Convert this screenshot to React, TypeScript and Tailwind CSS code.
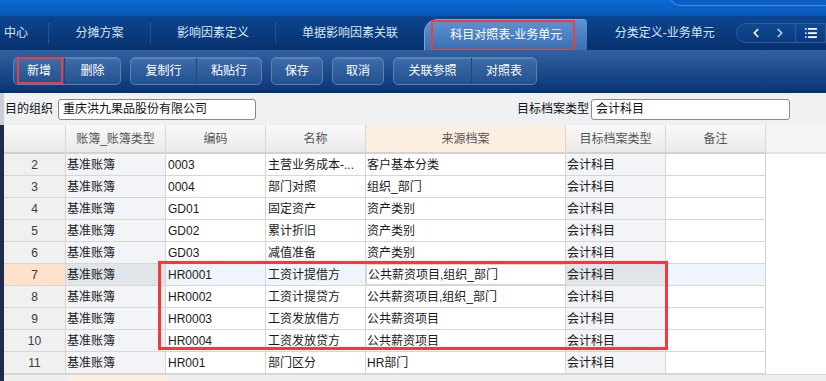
import { ChevronLeft, ChevronRight, List } from "lucide-react";

const font = "font-['Liberation_Sans','Noto_Sans_CJK_SC',sans-serif]";

const rows: string[][] = [
  ["2", "基准账簿", "0003", "主营业务成本-...", "客户基本分类", "会计科目"],
  ["3", "基准账簿", "0004", "部门对照", "组织_部门", "会计科目"],
  ["4", "基准账簿", "GD01", "固定资产", "资产类别", "会计科目"],
  ["5", "基准账簿", "GD02", "累计折旧", "资产类别", "会计科目"],
  ["6", "基准账簿", "GD03", "减值准备", "资产类别", "会计科目"],
  ["7", "基准账簿", "HR0001", "工资计提借方", "公共薪资项目,组织_部门", "会计科目"],
  ["8", "基准账簿", "HR0002", "工资计提贷方", "公共薪资项目,组织_部门", "会计科目"],
  ["9", "基准账簿", "HR0003", "工资发放借方", "公共薪资项目", "会计科目"],
  ["10", "基准账簿", "HR0004", "工资发放贷方", "公共薪资项目", "会计科目"],
  ["11", "基准账簿", "HR001", "部门区分", "HR部门", "会计科目"],
];

function Sep() {
  return <div className="h-[20px] w-0 border-l border-dotted border-[#3f67a3]" />;
}

function Btn({ label, w, first }: { label: string; w: string; first?: boolean }) {
  return (
    <div
      className={`${w} h-full flex items-center justify-center text-white text-[12px] ${
        first ? "" : "border-l border-[#1b457f]"
      }`}
    >
      {label}
    </div>
  );
}

function Group({ items }: { items: [string, string][] }) {
  return (
    <div className="flex h-[28px] rounded-[5px] border border-[#5a80b6] bg-gradient-to-b from-[#3e6dac] to-[#23508e] shadow-[inset_0_1px_0_rgba(255,255,255,0.15)]">
      {items.map(([l, w], i) => (
        <Btn key={l} label={l} w={w} first={i === 0} />
      ))}
    </div>
  );
}

export default function App() {
  return (
    <div className={`w-[826px] h-[381px] overflow-hidden bg-white ${font} text-[12px]`}>
      {/* header strip */}
      <div className="h-[16px] bg-gradient-to-b from-[#0d6ad4] to-[#0a55b6] relative">
        <div className="absolute left-[670px] top-[-10px] w-[200px] h-[16px] rounded-bl-[10px] border-l border-b border-[#4a8be0] bg-[#0b5ec7]" />
      </div>

      {/* tab bar */}
      <div className="h-[34px] flex items-end bg-gradient-to-b from-[#0b4690] to-[#08316f] text-[#dbe6f5]">
        <div className="h-full flex items-center">
          <div className="w-[48px] pl-[4px] flex items-center">中心</div>
          <Sep />
          <div className="w-[101px] text-center">分摊方案</div>
          <Sep />
          <div className="w-[124px] text-center">影响因素定义</div>
          <Sep />
          <div className="w-[148px] text-center">单据影响因素关联</div>
        </div>
        <div className="relative w-[167px] h-[31px] rounded-tl-[14px] rounded-tr-[4px] bg-gradient-to-b from-[#5d93d3] to-[#3a6fb2] border-t border-l border-[#7aa6dc] flex items-center justify-center text-white">
          科目对照表-业务单元
          <div className="absolute left-[6px] top-[0px] w-[144px] h-[31px] border-[2px] border-[#f03c3c]" />
        </div>
        <div className="w-[152px] h-full flex items-center justify-center pl-[6px]">分类定义-业务单元</div>
        <div className="h-full flex items-center">
          <div className="w-[90px] h-[20px] rounded-l-full border border-[#2f5d9a] bg-gradient-to-b from-[#0e4a94] to-[#0a3a7c] flex items-center">
            <ChevronLeft className="ml-[12px] w-[14px] h-[14px] text-white" strokeWidth={3} />
            <ChevronRight className="ml-[10px] w-[14px] h-[14px] text-[#b8c8e0]" strokeWidth={3} />
            <div className="ml-[8px] h-full border-l border-[#2f5d9a]" />
            <List className="ml-[8px] w-[14px] h-[14px] text-white" strokeWidth={3} />
          </div>
        </div>
      </div>

      {/* toolbar */}
      <div className="h-[43px] pt-[7px] pl-[13px] flex items-start gap-[9px] bg-gradient-to-b from-[#3062a2] to-[#0b3777] border-b-[3px] border-[#08306c] relative">
        <Group items={[["新增", "w-[50px]"], ["删除", "w-[56px]"]]} />
        <Group items={[["复制行", "w-[65px]"], ["粘贴行", "w-[65px]"]]} />
        <Group items={[["保存", "w-[50px]"]]} />
        <Group items={[["取消", "w-[50px]"]]} />
        <Group items={[["关联参照", "w-[77px]"], ["对照表", "w-[65px]"]]} />
        <div className="absolute left-[17px] top-[7px] w-[46px] h-[27px] border-[2px] border-[#f03c3c]" />
      </div>

      {/* body */}
      <div className="flex h-[288px]">
        <div className="w-[4px] flex flex-col">
          <div className="h-[32px] bg-[#c9ced6]" />
          <div className="flex-1 bg-[#1d2c4a]" />
        </div>
        <div className="flex-1 flex flex-col bg-[#f0f1f3]">
          {/* form row */}
          <div className="h-[32px] flex items-center text-[#111]">
            <span className="pl-[1px]">目的组织</span>
            <div className="ml-[5px] w-[198px] h-[21px] rounded-[3px] border border-[#8a8a8a] bg-white flex items-center pl-[4px]">
              重庆洪九果品股份有限公司
            </div>
            <div className="ml-[261px] h-full flex items-center bg-[#eef0f3]">
              <span>目标档案类型</span>
              <div className="ml-[2px] w-[199px] h-[21px] rounded-[3px] border border-[#8a8a8a] bg-white flex items-center pl-[4px]">
                会计科目
              </div>
            </div>
          </div>

          {/* table */}
          <div className="flex">
            <div className="relative w-[762px]">
              <div className="flex h-[29px] text-[#555] border-b-2 border-[#d2d2d2]">
                {[
                  ["", "w-[62px]", ""],
                  ["账簿_账簿类型", "w-[100px]", ""],
                  ["编码", "w-[100px]", ""],
                  ["名称", "w-[100px]", ""],
                  ["来源档案", "w-[200px]", "peach"],
                  ["目标档案类型", "w-[100px]", ""],
                  ["备注", "w-[100px]", ""],
                ].map(([l, w, c], i) => (
                  <div
                    key={i}
                    className={`${w} h-full flex items-center justify-center border-r border-[#d6d6d6] ${
                      c === "peach" ? "bg-[#fdeee2]" : "bg-gradient-to-b from-[#f9f9f9] to-[#e9e9e9]"
                    }`}
                  >
                    {l}
                  </div>
                ))}
              </div>
              {rows.map((r) => {
                const sel = r[0] === "7";
                return (
                  <div key={r[0]} className="flex h-[22px] border-b border-[#d6d6d6] text-[#1a1a1a]">
                    <div className={`w-[62px] flex items-center justify-center border-r border-[#d6d6d6] text-[#3a3a3a] ${sel ? "bg-[#fde1ca]" : "bg-[#f0f0f0]"}`}>
                      {r[0]}
                    </div>
                    <div className={`w-[100px] flex items-center pl-[1px] border-r border-[#d6d6d6] ${sel ? "bg-[#dfe5e9]" : "bg-[#f3f4f8]"}`}>
                      {r[1]}
                    </div>
                    <div className={`w-[100px] flex items-center pl-[2px] border-r border-[#d6d6d6] ${sel ? "bg-[#eef5fc]" : "bg-white"}`}>
                      {r[2]}
                    </div>
                    <div className={`w-[100px] flex items-center pl-[2px] border-r border-[#d6d6d6] whitespace-nowrap overflow-hidden ${sel ? "bg-[#eef5fc]" : "bg-white"}`}>
                      {r[3]}
                    </div>
                    <div className={`w-[200px] flex items-center pl-[1px] border-r border-[#d6d6d6] bg-white ${sel ? "border border-[#1e3f82]" : ""}`}>
                      {r[4]}
                    </div>
                    <div className={`w-[100px] flex items-center pl-[1px] border-r border-[#d6d6d6] ${sel ? "bg-[#dfe5e9]" : "bg-[#f3f4f8]"}`}>
                      {r[5]}
                    </div>
                    <div className={`w-[100px] border-r border-[#d0d0d0] ${sel ? "bg-[#eef5fc]" : "bg-white"}`} />
                  </div>
                );
              })}
              <div className="absolute left-[154px] top-[136px] w-[510px] h-[89px] border-[3px] border-[#f23a3a]" />
            </div>
            <div className="flex-1 flex flex-col">
              <div className="h-[29px] bg-[#f4f4f4] border-b-2 border-[#e2e2e2]" />
              <div className="flex-1 bg-white" />
            </div>
          </div>
          <div className="flex-1 flex bg-[#efefef] border-t border-[#d6d6d6]">
            <div className="w-[66px]" />
            <div className="w-[98px] bg-[#fdeee2]" />
          </div>
        </div>
      </div>
    </div>
  );
}
